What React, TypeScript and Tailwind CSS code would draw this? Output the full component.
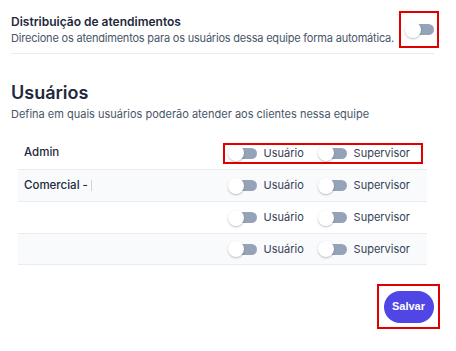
import React from 'react';

const Toggle: React.FC = () => (
  <span className="relative inline-flex h-[16px] w-[29px] shrink-0 items-center">
    <span className="absolute left-[6px] h-[11px] w-[23px] rounded-full bg-[#94a3b8]" />
    <span className="absolute left-0 h-[16px] w-[16px] rounded-full bg-white shadow-[0_1px_2px_rgba(0,0,0,0.25)]" />
  </span>
);

const users = [
  { name: 'Admin', striped: false, boxed: true },
  { name: 'Comercial - ', striped: true, boxed: false, cursor: true },
  { name: '', striped: false, boxed: false },
  { name: '', striped: true, boxed: false },
];

export default function App() {
  return (
    <div className="w-[456px] h-[351px] bg-white font-['Inter',sans-serif] text-[#1e293b] pl-[11px] pr-[22px]">
      {/* Distribuição */}
      <div className="flex items-center justify-between pt-[11px] pb-[5px] border-b border-[#e8ecf2]">
        <div className="whitespace-nowrap">
          <div className="text-[12px] font-semibold leading-[16px]">Distribuição de atendimentos</div>
          <div className="text-[11px] tracking-[-0.2px] leading-[16px] text-[#475569]">
            Direcione os atendimentos para os usuários dessa equipe forma automática.
          </div>
        </div>
        <div className="flex shrink-0 items-center justify-center w-[40px] h-[37px] border-2 border-[#e00000] -mr-[5px]">
          <Toggle />
        </div>
      </div>

      {/* Usuários */}
      <div className="pt-[28px]">
        <div className="text-[18px] font-semibold leading-[22px]">Usuários</div>
        <div className="text-[11px] leading-[16px] text-[#475569] mt-[2px]">
          Defina em quais usuários poderão atender aos clientes nessa equipe
        </div>
      </div>

      <div className="mt-[15px] ml-[7px] mr-[7px]">
        {users.map((u, i) => (
          <div
            key={i}
            className={`flex items-center justify-between h-[32px] pl-[6px] pr-[4px] ${i > 0 ? 'border-t border-[#e8ecf2]' : ''} ${i === users.length - 1 ? 'border-b border-[#e8ecf2]' : ''} ${u.striped ? 'bg-[#f8fafc]' : 'bg-white'}`}
          >
            <div className="text-[11.5px] font-medium text-[#1e293b]">
              {u.name}
              {u.cursor && <span className="inline-block w-px h-[11px] bg-[#cbd5e1] align-middle" />}
            </div>
            <div
              className={`flex items-center gap-[7px] h-[21px] pl-[3px] pr-[11px] border-2 whitespace-nowrap ${u.boxed ? 'border-[#e00000]' : 'border-transparent'}`}
            >
              <Toggle />
              <span className="w-[47px] text-[11px] text-[#334155]">Usuário</span>
              <Toggle />
              <span className="text-[11px] text-[#334155]">Supervisor</span>
            </div>
          </div>
        ))}
      </div>

      <div className="flex justify-end mt-[19px] mr-[-6px]">
        <div className="border-2 border-[#e00000] w-[63px] h-[45px] flex items-center justify-center">
          <button className="h-[32px] w-[50px] rounded-full bg-[#4f46e5] text-white text-[11px] font-bold font-['Liberation_Sans',sans-serif]">
            Salvar
          </button>
        </div>
      </div>
    </div>
  );
}
